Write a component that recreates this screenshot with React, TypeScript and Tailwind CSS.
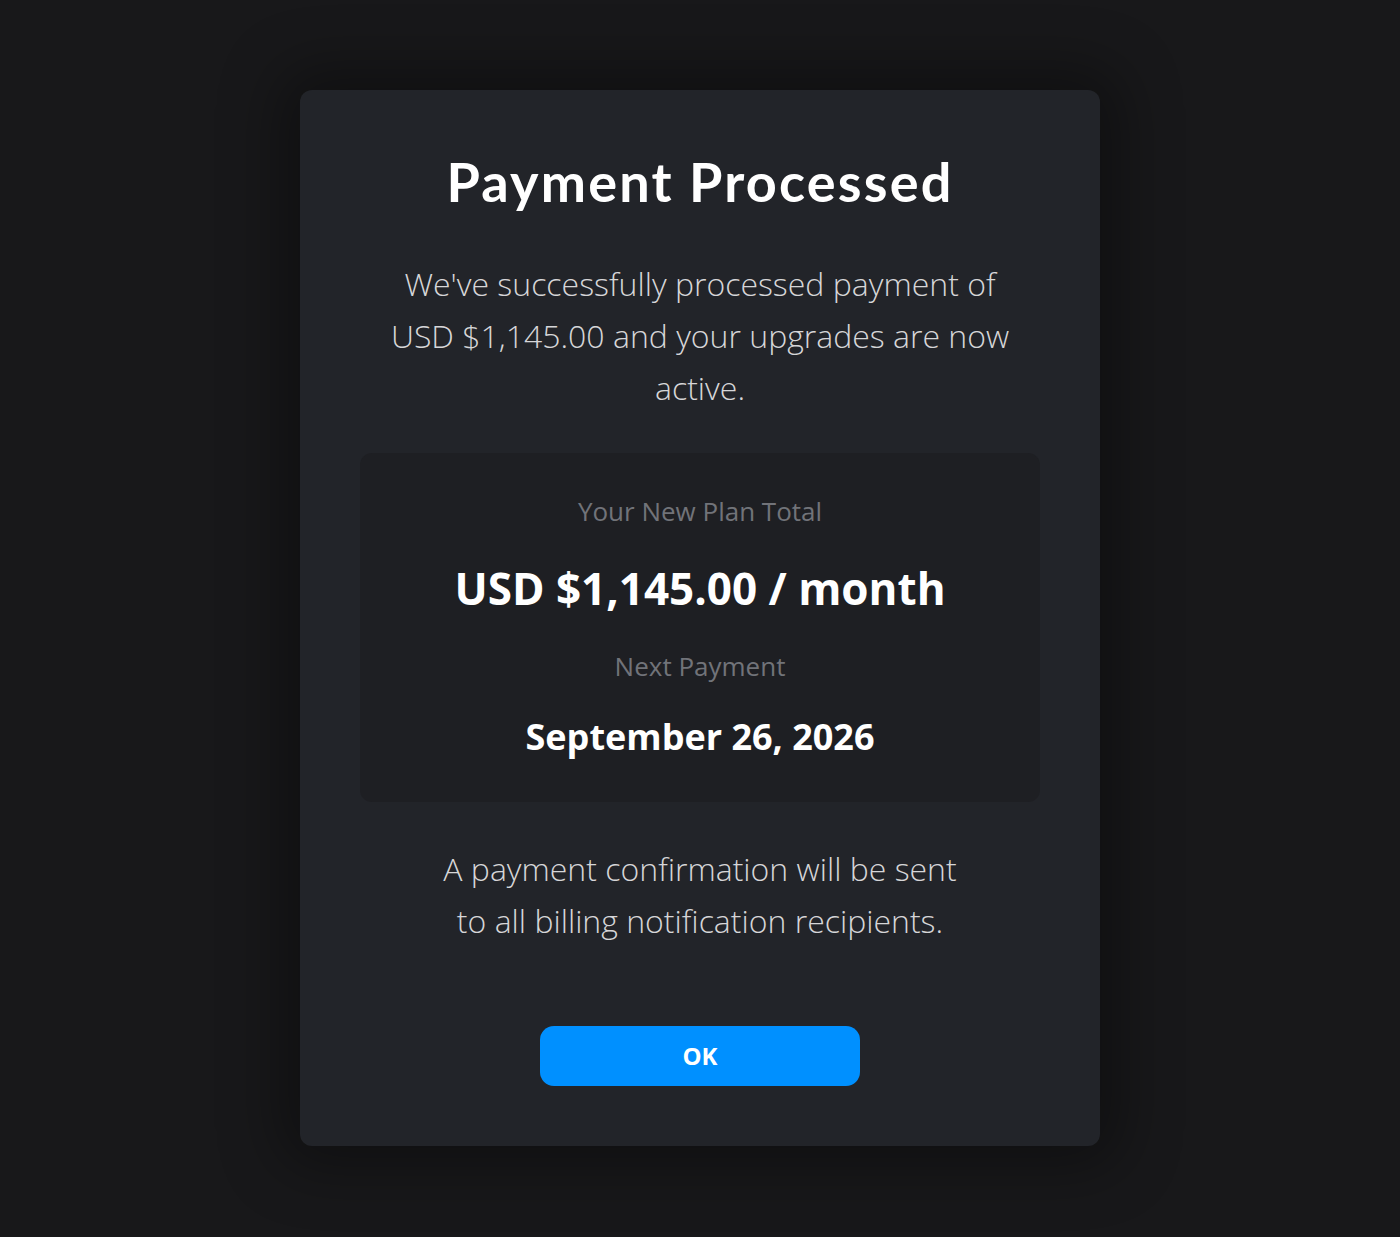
export default function App() {
  return (
    <div className="min-h-[1237px] w-full bg-[#18181a] flex justify-center items-start pt-[90px]" style={{ fontFamily: '"Open Sans", sans-serif' }}>
      <div className="w-[800px] rounded-xl bg-[#222429] shadow-[0_0_60px_20px_rgba(0,0,0,0.35)] flex flex-col items-center px-[60px] pb-[60px]">
        <h1
          className="mt-[59px] text-[54px] leading-[66px] font-bold tracking-[2.2px] text-white"
          style={{ fontFamily: 'Lato, sans-serif' }}
        >
          Payment Processed
        </h1>
        <p className="mt-[43px] w-[624px] text-center text-[32px] leading-[52px] font-light text-[#d6d6d8]">
          We've successfully processed payment of USD $1,145.00 and your upgrades are now active.
        </p>
        <div className="mt-[39px] w-[680px] rounded-xl bg-[#1e1f23] flex flex-col items-center pt-[39px] pb-[40px]">
          <div className="text-[26px] leading-[38px] text-[#717379]">Your New Plan Total</div>
          <div className="mt-[30px] text-[44px] leading-[56px] font-bold text-white">USD $1,145.00 / month</div>
          <div className="mt-[31px] text-[26px] leading-[38px] text-[#717379]">Next Payment</div>
          <div className="mt-[27px] text-[36px] leading-[50px] font-bold text-white">September 26, 2026</div>
        </div>
        <p className="mt-[41px] w-[530px] text-center text-[32px] leading-[52px] font-light text-[#d6d6d8]">
          A payment confirmation will be sent to all billing notification recipients.
        </p>
        <button className="mt-[79px] w-[320px] h-[60px] rounded-[14px] bg-[#0090ff] text-white text-[24px] font-bold">
          OK
        </button>
      </div>
    </div>
  );
}
